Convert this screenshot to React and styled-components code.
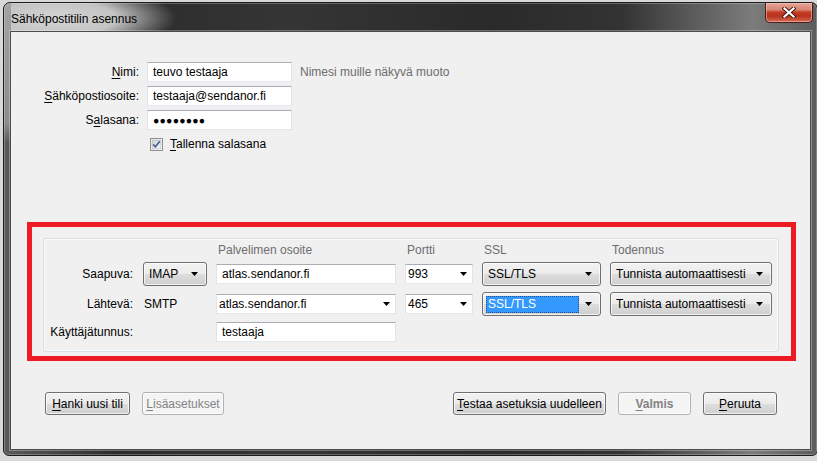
import React from "react";
import styled, { createGlobalStyle } from "styled-components";

const Global = createGlobalStyle`
  html, body {
    margin: 0;
    padding: 0;
    background: #d8d8d8;
    overflow: hidden;
  }
  body {
    font-family: "Liberation Sans", Arial, sans-serif;
    font-size: 12px;
    color: #000;
  }
`;

const Window = styled.div`
  margin: 2px 0 0 3px;
  width: 815px;
  height: 454px;
  box-sizing: border-box;
  display: flex;
  flex-direction: column;
  padding: 0 6px 5px 6px;
  border: 1px solid #1c1c1c;
  border-radius: 7px 7px 6px 6px;
  background:
    linear-gradient(to bottom, #a2a2a2 0, #8c8c8c 120px, rgba(60, 60, 60, 0) 140px) 0 0 / 7px 100% no-repeat,
    radial-gradient(ellipse 120px 34px at 52px 15px, #d4d4d4 0%, #c4c4c4 50%, rgba(70, 70, 70, 0) 100%),
    linear-gradient(to right, #5a5a5a 0%, #2c2c2c 14%, #353535 35%, #2a2a2a 60%, #333333 76%, #7c7c7c 92%, #5c5c5c 100%);
  box-shadow: inset 0 0 0 1px rgba(255, 255, 255, 0.25);
`;

const TitleBar = styled.div`
  height: 28px;
  display: flex;
  justify-content: space-between;
  align-items: flex-start;
`;

const TitleText = styled.div`
  padding: 9px 0 0 1px;
  font-size: 12px;
  color: #000;
`;

const CloseButton = styled.div`
  width: 46px;
  height: 19px;
  margin-right: -2px;
  border: 1px solid #4a1e16;
  border-top: none;
  border-radius: 0 0 5px 5px;
  display: flex;
  align-items: center;
  justify-content: center;
  background: linear-gradient(#e6a597 0%, #d88572 35%, #c13a22 50%, #b8341e 70%, #d56c55 100%);
  box-shadow: inset 0 0 0 1px rgba(255, 220, 210, 0.45);
`;

const Content = styled.div`
  flex: 1;
  display: flex;
  flex-direction: column;
  padding: 30px 14px 0 16px;
  background: #f0f0f0;
  border: 1px solid #4c4c4c;
  box-shadow: 0 0 0 1px rgba(255, 255, 255, 0.3);
`;

const TopForm = styled.div`
  display: grid;
  grid-template-columns: 112px 145px auto;
  grid-auto-rows: 20px;
  column-gap: 8px;
  row-gap: 4px;
  align-items: center;
`;

const Label = styled.div`
  text-align: right;
  white-space: nowrap;
  padding-right: ${(p) => p.$pr || 0}px;
`;

const Key = styled.span`
  text-decoration: underline;
  text-underline-offset: 2px;
`;

const TextBox = styled.div`
  height: 20px;
  box-sizing: border-box;
  display: flex;
  align-items: center;
  padding: 0 5px;
  background: #fff;
  border: 1px solid;
  border-color: #abadb3 #e2e3ea #e3e9ef #e2e3ea;
  white-space: nowrap;
  overflow: hidden;
`;

const Dots = styled.span`
  font-size: 10.5px;
  letter-spacing: 0.2px;
`;

const Hint = styled.div`
  color: #6d6d6d;
  white-space: nowrap;
`;

const CheckRow = styled.label`
  display: flex;
  align-items: center;
  gap: 7px;
  padding-left: 3px;
  white-space: nowrap;
`;

const RedBox = styled.div`
  margin-top: 68px;
  border: 5px solid #ed1c24;
  padding: 11px 12px 4px 11px;
`;

const GroupBox = styled.div`
  border: 1px solid #d5dfe5;
  border-radius: 3px;
  box-shadow: inset 0 0 0 1px #fafafa;
  padding: 5px 6px 9px 0;
  display: grid;
  grid-template-columns: 90px 64px 180px 68px 119px 162px;
  grid-template-rows: 12px 24px 24px 20px;
  column-gap: 9px;
  row-gap: 6px;
  align-items: center;
`;

const Header = styled.div`
  color: #6d6d6d;
  padding-left: 2px;
  line-height: 12px;
  white-space: nowrap;
`;

const Plain = styled.div`
  padding-left: 1px;
`;

const DropDown = styled.div`
  height: 24px;
  box-sizing: border-box;
  display: flex;
  align-items: center;
  justify-content: space-between;
  padding: 0 8px 0 ${(p) => (p.$focused ? 3 : 5)}px;
  border: 1px solid #707070;
  border-radius: 3px;
  background: linear-gradient(#f2f2f2 0%, #ebebeb 50%, #dddddd 51%, #cfcfcf 100%);
  box-shadow: inset 0 0 0 1px rgba(255, 255, 255, 0.7);
  white-space: nowrap;
`;

const Selected = styled.span`
  flex: 1;
  margin-right: 6px;
  height: 17px;
  line-height: 17px;
  padding-left: 2px;
  background: #3399ff;
  color: #fff;
  outline: 1px dotted #2a4f80;
  outline-offset: -1px;
`;

const ComboBox = styled(TextBox)`
  justify-content: space-between;
  padding: 0 5px 0 ${(p) => p.$pl || 2}px;
`;

const ButtonRow = styled.div`
  margin: 31px 19px 0 18px;
  display: flex;
  gap: 12px;
`;

const Spacer = styled.div`
  flex: 1;
`;

const Button = styled.div`
  width: ${(p) => p.$w}px;
  height: 23px;
  box-sizing: border-box;
  display: flex;
  align-items: center;
  justify-content: center;
  border: 1px solid ${(p) => (p.$disabled ? "#adb2b5" : "#707070")};
  border-radius: 3px;
  color: ${(p) => (p.$disabled ? "#838383" : "#000")};
  font-weight: ${(p) => (p.$bold ? "bold" : "normal")};
  background: ${(p) =>
    p.$disabled
      ? "#f4f4f4"
      : "linear-gradient(#f2f2f2 0%, #ebebeb 50%, #dddddd 51%, #cfcfcf 100%)"};
  box-shadow: inset 0 0 0 1px rgba(255, 255, 255, 0.7);
  white-space: nowrap;
`;

function Arrow() {
  return (
    <svg width="7" height="4" viewBox="0 0 7 4">
      <polygon points="0,0 7,0 3.5,4" fill="#000" />
    </svg>
  );
}

function CheckBox() {
  return (
    <svg width="13" height="13" viewBox="0 0 13 13">
      <defs>
        <linearGradient id="cb" x1="0" y1="0" x2="1" y2="1">
          <stop offset="0" stopColor="#cbcfd5" />
          <stop offset="1" stopColor="#f6f6f6" />
        </linearGradient>
      </defs>
      <rect x="0.5" y="0.5" width="12" height="12" fill="#fff" stroke="#8e8f8f" />
      <rect x="2" y="2" width="9" height="9" fill="url(#cb)" stroke="#aeb3b9" strokeWidth="0.6" />
      <path d="M3.2 6.4 L5.4 8.8 L9.8 3.2" fill="none" stroke="#4a5f97" strokeWidth="1.7" />
    </svg>
  );
}

function CloseX() {
  return (
    <svg width="14" height="11" viewBox="0 0 14 11">
      <path d="M2.5 1.5 L11.5 9.5 M11.5 1.5 L2.5 9.5" stroke="#3b1710" strokeWidth="4" strokeLinecap="square" />
      <path d="M2.5 1.5 L11.5 9.5 M11.5 1.5 L2.5 9.5" stroke="#fff" strokeWidth="2.2" strokeLinecap="square" />
    </svg>
  );
}

export default function App() {
  return (
    <>
      <Global />
      <Window>
        <TitleBar>
          <TitleText>Sähköpostitilin asennus</TitleText>
          <CloseButton>
            <CloseX />
          </CloseButton>
        </TitleBar>
        <Content>
          <TopForm>
            <Label>
              <Key>N</Key>imi:
            </Label>
            <TextBox>teuvo testaaja</TextBox>
            <Hint>Nimesi muille näkyvä muoto</Hint>

            <Label>
              <Key>S</Key>ähköpostiosoite:
            </Label>
            <TextBox>testaaja@sendanor.fi</TextBox>
            <div />

            <Label>
              S<Key>a</Key>lasana:
            </Label>
            <TextBox>
              <Dots>●●●●●●●●</Dots>
            </TextBox>
            <div />

            <div />
            <CheckRow>
              <CheckBox />
              <span>
                <Key>T</Key>allenna salasana
              </span>
            </CheckRow>
          </TopForm>

          <RedBox>
            <GroupBox>
              <div />
              <div />
              <Header>Palvelimen osoite</Header>
              <Header>Portti</Header>
              <Header>SSL</Header>
              <Header>Todennus</Header>

              <Label $pr={1}>Saapuva:</Label>
              <DropDown>
                <span>IMAP</span>
                <Arrow />
              </DropDown>
              <TextBox>atlas.sendanor.fi</TextBox>
              <ComboBox>
                <span>993</span>
                <Arrow />
              </ComboBox>
              <DropDown>
                <span>SSL/TLS</span>
                <Arrow />
              </DropDown>
              <DropDown>
                <span>Tunnista automaattisesti</span>
                <Arrow />
              </DropDown>

              <Label $pr={1}>Lähtevä:</Label>
              <Plain>SMTP</Plain>
              <ComboBox>
                <span>atlas.sendanor.fi</span>
                <Arrow />
              </ComboBox>
              <ComboBox>
                <span>465</span>
                <Arrow />
              </ComboBox>
              <DropDown $focused>
                <Selected>SSL/TLS</Selected>
                <Arrow />
              </DropDown>
              <DropDown>
                <span>Tunnista automaattisesti</span>
                <Arrow />
              </DropDown>

              <Label $pr={1}>Käyttäjätunnus:</Label>
              <div />
              <TextBox>testaaja</TextBox>
            </GroupBox>
          </RedBox>

          <ButtonRow>
            <Button $w={85}>
              <span>
                <Key>H</Key>anki uusi tili
              </span>
            </Button>
            <Button $w={82} $disabled>
              <span>
                <Key>L</Key>isäasetukset
              </span>
            </Button>
            <Spacer />
            <Button $w={153}>
              <span>
                <Key>T</Key>estaa asetuksia uudelleen
              </span>
            </Button>
            <Button $w={73} $disabled $bold>
              <span>
                <Key>V</Key>almis
              </span>
            </Button>
            <Button $w={74}>
              <span>
                <Key>P</Key>eruuta
              </span>
            </Button>
          </ButtonRow>
        </Content>
      </Window>
    </>
  );
}
